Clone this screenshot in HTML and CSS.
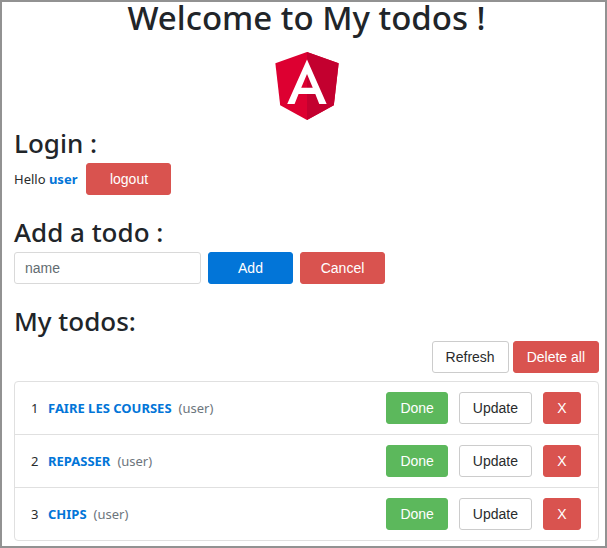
FILE: index.html
```html
<!DOCTYPE html>
<html lang="en">
<head>
<meta charset="utf-8">
<meta name="viewport" content="width=device-width, initial-scale=1">
<title>My todos</title>
<link rel="stylesheet" href="styles.css">
</head>
<body>
<main class="app">
  <header class="hero">
    <h1>Welcome to My todos !</h1>
    <svg class="logo" viewBox="31 30 188 200" role="img" aria-label="Angular">
      <path fill="#dd0031" d="M125 30 31.900 63.200 46.100 186.300 125 230 203.900 186.300 218.100 63.200z"/>
      <path fill="#c3002f" d="M125 30V230L203.900 186.300 218.100 63.200z"/>
      <path fill="#fff" d="M125 52.100 66.800 182.600H88.500L100.200 153.400H149.400L161.100 182.600H182.800zM142 135.400H108L125 94.500z"/>
    </svg>
  </header>

  <section class="block">
    <h2>Login :</h2>
    <div class="line login">
      <span>Hello <strong class="accent">user</strong></span>
      <button class="btn wide danger" type="button">logout</button>
    </div>
  </section>

  <section class="block">
    <h2>Add a todo :</h2>
    <form class="line">
      <input class="field" type="text" placeholder="name" aria-label="name">
      <button class="btn wide primary" type="button">Add</button>
      <button class="btn wide danger" type="reset">Cancel</button>
    </form>
  </section>

  <section>
    <h2>My todos:</h2>
    <div class="toolbar">
      <button class="btn" type="button">Refresh</button>
      <button class="btn wide danger" type="button">Delete all</button>
    </div>
    <ul class="todos">
      <li class="todo">
        <span class="rank">1</span><strong class="accent">FAIRE LES COURSES</strong><span class="owner">(user)</span>
        <div class="actions">
          <button class="btn success" type="button">Done</button>
          <button class="btn" type="button">Update</button>
          <button class="btn small danger" type="button">X</button>
        </div>
      </li>
      <li class="todo">
        <span class="rank">2</span><strong class="accent">REPASSER</strong><span class="owner">(user)</span>
        <div class="actions">
          <button class="btn success" type="button">Done</button>
          <button class="btn" type="button">Update</button>
          <button class="btn small danger" type="button">X</button>
        </div>
      </li>
      <li class="todo">
        <span class="rank">3</span><strong class="accent">CHIPS</strong><span class="owner">(user)</span>
        <div class="actions">
          <button class="btn success" type="button">Done</button>
          <button class="btn" type="button">Update</button>
          <button class="btn small danger" type="button">X</button>
        </div>
      </li>
    </ul>
  </section>
</main>
</body>
</html>
```
FILE: styles.css
```css
* {
  box-sizing: border-box;
}

body {
  margin: 0;
  background: #fff;
  color: #292b2c;
  font: 13px/20px "Segoe UI", "Noto Sans", "Open Sans", sans-serif;
}

.app {
  min-height: 100vh;
  padding: 0 6px 5px 12px;
  border: 2px solid #929292;
}

h1,
h2 {
  margin: 0;
  color: #212529;
  font-weight: 500;
}

h1 {
  font-size: 33px;
  line-height: 32px;
}

h2 {
  font-size: 26px;
  line-height: 36px;
}

.hero {
  display: flex;
  flex-direction: column;
  align-items: center;
  gap: 18px;
  margin-bottom: 5px;
}

.logo {
  width: 64px;
  height: 68px;
}

.block {
  margin-bottom: 19px;
}

.line {
  display: flex;
  align-items: center;
  gap: 7px;
  margin-top: 2px;
}

.login {
  gap: 9px;
}

.accent {
  color: #0275d8;
  font-weight: 700;
}

.btn,
.field {
  height: 32px;
  border: 1px solid #ccc;
  border-radius: 3px;
  background: #fff;
  color: #292b2c;
  font: 14px/20px Arial, "Liberation Sans", sans-serif;
}

.btn {
  padding: 0 13px;
}

.field {
  width: 187px;
  padding: 0 10px;
  border-color: #d9d9d9;
}

.field::placeholder {
  color: #636c72;
  opacity: 1;
}

.wide {
  min-width: 85px;
}

.small {
  min-width: 38px;
}

.primary {
  border-color: #0275d8;
  background: #0275d8;
  color: #fff;
}

.danger {
  border-color: #d9534f;
  background: #d9534f;
  color: #fff;
}

.success {
  border-color: #5cb85c;
  background: #5cb85c;
  color: #fff;
}

.toolbar {
  display: flex;
  justify-content: flex-end;
  gap: 4px;
  margin: 2px 0 8px;
}

.todos {
  margin: 0;
  padding: 0;
  border: 1px solid #e0e0e0;
  border-radius: 4px;
  list-style: none;
}

.todo {
  display: flex;
  align-items: center;
  padding: 10px 17px 10px 16px;
}

.todo + .todo {
  border-top: 1px solid #e0e0e0;
}

.rank {
  width: 17px;
}

.owner {
  margin-left: 7px;
  color: #6c757d;
}

.actions {
  display: flex;
  gap: 11px;
  margin-left: auto;
}
```
